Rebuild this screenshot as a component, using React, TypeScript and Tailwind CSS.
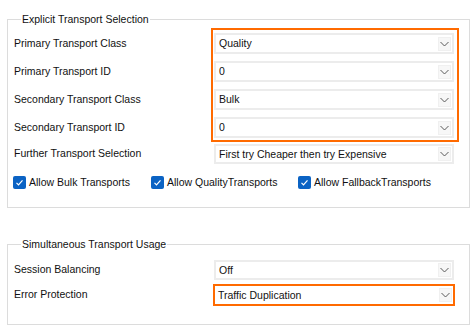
import React from "react";

function Chevron() {
  return (
    <svg width="9" height="6" viewBox="0 0 9 6" className="block">
      <polyline points="0.5,1 4.5,5 8.5,1" fill="none" stroke="#5a5a5a" strokeWidth="1" />
    </svg>
  );
}

function Combo({ value, w, h, orange }: { value: string; w: string; h: string; orange?: boolean }) {
  return (
    <div
      className={`flex items-center bg-white border-2 ${orange ? "border-[#ff6a00]" : "border-[#ececec]"} ${w} ${h}`}
    >
      <span className="flex-1 pl-[3px] leading-none whitespace-nowrap">{value}</span>
      <div className="w-[13px] h-[14px] mr-[1px] bg-[#f7f7f7] border border-[#f0f0f0] flex items-center justify-center">
        <Chevron />
      </div>
    </div>
  );
}

function Check({ label, w }: { label: string; w: string }) {
  return (
    <div className={`flex items-center ${w}`}>
      <div className="w-[13px] h-[13px] rounded-[2px] bg-[#0b63c4] flex items-center justify-center">
        <svg width="13" height="13" viewBox="0 0 13 13">
          <polyline points="3.5,6.8 5.5,8.8 9.5,4.4" fill="none" stroke="#ffffff" strokeWidth="1.2" />
        </svg>
      </div>
      <span className="ml-[3px] whitespace-nowrap">{label}</span>
    </div>
  );
}

function Label({ text, w }: { text: string; w: string }) {
  return <div className={`${w} flex items-center whitespace-nowrap`}>{text}</div>;
}

export default function App() {
  return (
    <div className="w-[476px] h-[330px] bg-white overflow-hidden pt-[12px] pl-[7px] text-[10.5px] text-[#111] font-['Liberation_Sans',Arial,sans-serif]">
      <fieldset className="w-[463px] h-[196px] border border-[#dcdcdc] pl-[6px]">
        <legend className="ml-[7px] px-[1px] leading-[14px]">Explicit Transport Selection</legend>
        <div className="flex mt-[2px]">
          <div className="w-[197px] pt-[5px] flex flex-col gap-[7px]">
            <Label text="Primary Transport Class" w="h-[21px]" />
            <Label text="Primary Transport ID" w="h-[21px]" />
            <Label text="Secondary Transport Class" w="h-[21px]" />
            <Label text="Secondary Transport ID" w="h-[21px]" />
          </div>
          <div className="w-[248px] border-2 border-[#ff6a00] pt-[3px] pb-[2px] pl-[1px] pr-[3px] flex flex-col gap-[7px]">
            <Combo value="Quality" w="w-[240px]" h="h-[21px]" />
            <Combo value="0" w="w-[240px]" h="h-[21px]" />
            <Combo value="Bulk" w="w-[240px]" h="h-[21px]" />
            <Combo value="0" w="w-[240px]" h="h-[21px]" />
          </div>
        </div>
        <div className="flex mt-[2px]">
          <Label text="Further Transport Selection" w="w-[200px] h-[20px]" />
          <Combo value="First try Cheaper then try Expensive" w="w-[240px]" h="h-[20px]" />
        </div>
        <div className="flex mt-[11px] -ml-[1px]">
          <Check label="Allow Bulk Transports" w="w-[138px]" />
          <Check label="Allow QualityTransports" w="w-[147px]" />
          <Check label="Allow FallbackTransports" w="w-[150px]" />
        </div>
      </fieldset>
      <fieldset className="w-[463px] h-[88px] mt-[29px] border border-[#dcdcdc] pl-[6px]">
        <legend className="ml-[7px] px-[1px] leading-[14px]">Simultaneous Transport Usage</legend>
        <div className="flex mt-[9px]">
          <Label text="Session Balancing" w="w-[200px] h-[20px]" />
          <Combo value="Off" w="w-[240px]" h="h-[20px]" />
        </div>
        <div className="flex mt-[4px]">
          <Label text="Error Protection" w="w-[199px] h-[22px]" />
          <Combo value="Traffic Duplication" w="w-[242px]" h="h-[22px]" orange />
        </div>
      </fieldset>
    </div>
  );
}
